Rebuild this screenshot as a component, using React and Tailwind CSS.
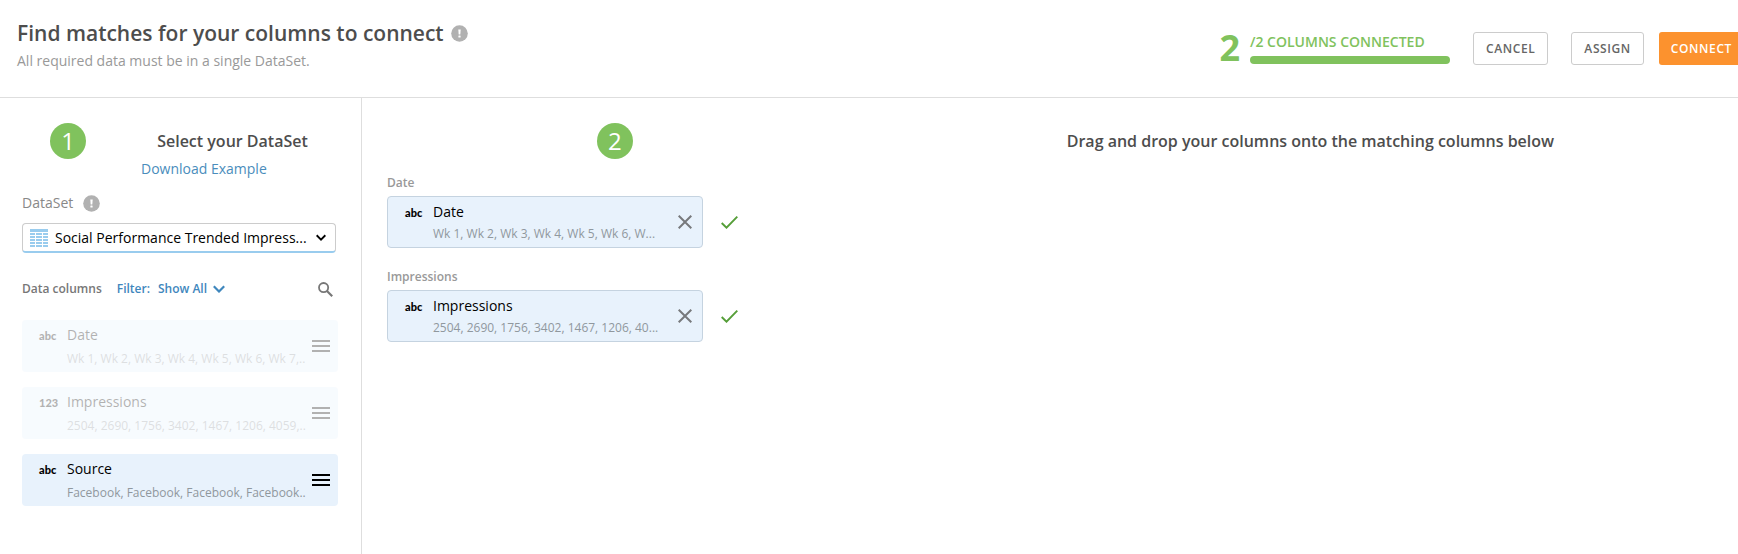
import React from "react";

const sourceColumns = [
  { name: "Date", type: "abc", sample: "Wk 1, Wk 2, Wk 3, Wk 4, Wk 5, Wk 6, Wk 7,..", used: true },
  { name: "Impressions", type: "123", sample: "2504, 2690, 1756, 3402, 1467, 1206, 4059,..", used: true },
  { name: "Source", type: "abc", sample: "Facebook, Facebook, Facebook, Facebook..", used: false },
];

const matchedColumns = [
  { label: "Date", name: "Date", sample: "Wk 1, Wk 2, Wk 3, Wk 4, Wk 5, Wk 6, W..." },
  { label: "Impressions", name: "Impressions", sample: "2504, 2690, 1756, 3402, 1467, 1206, 40..." },
];

function InfoIcon() {
  return (
    <svg className="size-[17px] shrink-0" viewBox="0 0 17 17" aria-hidden="true">
      <circle cx="8.5" cy="8.5" r="8.3" fill="#b1b1b1" />
      <path d="M7.3 4.4h2.4l-.4 5.2H7.7z" fill="#fff" />
      <rect x="7.4" y="10.6" width="2.2" height="2" rx=".5" fill="#fff" />
    </svg>
  );
}

function TableIcon() {
  return (
    <svg className="size-[18px] shrink-0" viewBox="0 0 18 18" fill="#99ccee" aria-hidden="true">
      <rect width="18" height="3" />
      {[4, 7, 10, 13, 16].map((y) => (
        <g key={y}>
          <rect x="0" y={y} width="5" height="2" />
          <rect x="6" y={y} width="6" height="2" />
          <rect x="13" y={y} width="5" height="2" />
        </g>
      ))}
    </svg>
  );
}

function Chevron({ className }) {
  return (
    <svg className={className} viewBox="0 0 12 8" fill="none" stroke="currentColor" strokeWidth="2.2" aria-hidden="true">
      <path d="M.8 1.3 6 6.5l5.2-5.2" />
    </svg>
  );
}

function StepBadge({ children }) {
  return (
    <span className="flex size-9 items-center justify-center rounded-full bg-[#80c25d] text-2xl text-white">
      {children}
    </span>
  );
}

function TypeTag({ children }) {
  return (
    <span className="w-7 shrink-0 font-['Lato',sans-serif] text-[11px] leading-[22px] font-black">{children}</span>
  );
}

function SourceRow({ column }) {
  return (
    <li className={`flex h-[52px] items-center rounded bg-[#e8f2fc] pr-2 pl-[17px] text-black ${column.used ? "opacity-30" : ""}`}>
      <div className="flex min-w-0 flex-1 items-start pt-[2px]">
        <TypeTag>{column.type}</TypeTag>
        <div className="min-w-0">
          <div className="text-sm leading-5">{column.name}</div>
          <div className="mt-1 text-xs leading-5 whitespace-nowrap text-[#90989e]">{column.sample}</div>
        </div>
      </div>
      <button type="button" aria-label={`Drag ${column.name}`} className="shrink-0">
        <svg className="h-3 w-[18px]" viewBox="0 0 18 12" fill="currentColor" aria-hidden="true">
          <path d="M0 0h18v2H0zM0 5h18v2H0zM0 10h18v2H0z" />
        </svg>
      </button>
    </li>
  );
}

function MatchRow({ column }) {
  return (
    <div>
      <div className="text-xs leading-5 font-semibold text-[#999]">{column.label}</div>
      <div className="mt-[3px] flex items-center">
        <div className="flex h-[52px] w-[316px] items-center rounded border border-[#c5d3e0] bg-[#e8f2fc] pr-[10px] pl-[17px] text-black">
          <div className="flex min-w-0 flex-1 items-start pt-[2px]">
            <TypeTag>abc</TypeTag>
            <div className="min-w-0">
              <div className="text-sm leading-5">{column.name}</div>
              <div className="mt-[2px] text-xs leading-5 whitespace-nowrap text-[#90989e]">{column.sample}</div>
            </div>
          </div>
          <button type="button" aria-label={`Remove ${column.name}`} className="shrink-0">
            <svg className="size-[14px]" viewBox="0 0 14 14" stroke="#77797c" strokeWidth="2" aria-hidden="true">
              <path d="m.7.7 12.6 12.6M13.3.7.7 13.3" />
            </svg>
          </button>
        </div>
        <svg className="ml-[18px] h-[13px] w-[17px]" viewBox="0 0 17 13" fill="none" stroke="#559e38" strokeWidth="1.9" aria-hidden="true">
          <path d="m.7 7 4.8 4.7L16.3.7" />
        </svg>
      </div>
    </div>
  );
}

export default function App() {
  return (
    <div className="flex min-h-screen flex-col overflow-hidden bg-white font-['Open_Sans',sans-serif] text-[#4d4d4d]">
      <header className="flex h-[98px] items-start border-b border-[#dedede] pl-[17px]">
        <div className="pt-[19px]">
          <div className="flex items-center gap-[7px]">
            <h1 className="text-[21px] leading-7 font-semibold">Find matches for your columns to connect</h1>
            <InfoIcon />
          </div>
          <p className="mt-1 text-sm leading-5 text-[#999]">All required data must be in a single DataSet.</p>
        </div>
        <div className="-mr-[6px] ml-auto flex items-start pt-[32px]">
          <div className="mr-[23px] flex items-end gap-[10px] text-[#80c25d]">
            <span className="text-4xl leading-8 font-bold">2</span>
            <div className="w-[200px]">
              <div className="text-sm leading-5 font-semibold">/2 COLUMNS CONNECTED</div>
              <div className="mt-1 h-2 rounded-full bg-[#80c25d]" />
            </div>
          </div>
          <button type="button" className="mr-[23px] h-[33px] rounded-[3px] border border-[#ccc] px-3 text-xs font-semibold tracking-wider text-[#666]">CANCEL</button>
          <button type="button" className="mr-[15px] h-[33px] rounded-[3px] border border-[#ccc] px-3 text-xs font-semibold tracking-wider text-[#666]">ASSIGN</button>
          <button type="button" className="h-[33px] rounded-[3px] bg-[#fc922e] px-3 text-xs font-semibold tracking-wider text-white">CONNECT</button>
        </div>
      </header>

      <main className="flex flex-1">
        <aside className="w-[362px] shrink-0 border-r border-[#dedede] pr-[23px] pl-[22px] pt-[25px]">
          <div className="-mr-[13px] grid grid-cols-[92px_1fr] items-center justify-items-center">
            <StepBadge>1</StepBadge>
            <h2 className="text-base leading-6 font-semibold">Select your DataSet</h2>
          </div>
          <a href="#example" className="ml-[119px] block text-sm leading-5 text-[#4a8dbc]">Download Example</a>

          <div className="mt-[14px] flex items-center gap-[10px] text-sm leading-5 text-[#888]">
            <label htmlFor="dataset">DataSet</label>
            <InfoIcon />
          </div>
          <div className="mt-[10px] mr-[2px] flex h-[30px] items-center rounded border border-b-2 border-[#ccc] border-b-[#99ccee] px-[7px] text-black">
            <TableIcon />
            <select id="dataset" className="ml-[7px] min-w-0 flex-1 appearance-none bg-transparent text-sm leading-5">
              <option>Social Performance Trended Impress...</option>
            </select>
            <Chevron className="mr-[2px] h-[7px] w-[10px] shrink-0" />
          </div>

          <div className="mt-[26px] flex items-center text-xs leading-5 font-semibold">
            <span className="text-[#777]">Data columns</span>
            <button type="button" className="ml-[15px] flex items-center gap-2 text-[#3f87bd]">
              <span>Filter:</span>
              <span>Show All</span>
              <Chevron className="-ml-[2px] h-2 w-3" />
            </button>
            <button type="button" aria-label="Search columns" className="mr-[5px] ml-auto">
              <svg className="size-[15px]" viewBox="0 0 15 15" fill="none" stroke="#777" strokeWidth="1.8" aria-hidden="true">
                <circle cx="5.6" cy="5.6" r="4.6" />
                <path d="m9 9 5.2 5.2" strokeWidth="2.2" />
              </svg>
            </button>
          </div>

          <ul className="mt-[21px] flex flex-col gap-[15px]">
            {sourceColumns.map((column) => (
              <SourceRow key={column.name} column={column} />
            ))}
          </ul>
        </aside>

        <section className="min-w-0 flex-1 pt-[25px]">
          <div className="-mr-[15px] grid grid-cols-[4fr_7fr] items-center justify-items-center">
            <StepBadge>2</StepBadge>
            <h2 className="text-base leading-6 font-semibold">Drag and drop your columns onto the matching columns below</h2>
          </div>
          <div className="mt-[14px] flex flex-col gap-[19px] pl-[25px]">
            {matchedColumns.map((column) => (
              <MatchRow key={column.label} column={column} />
            ))}
          </div>
        </section>
      </main>
    </div>
  );
}
